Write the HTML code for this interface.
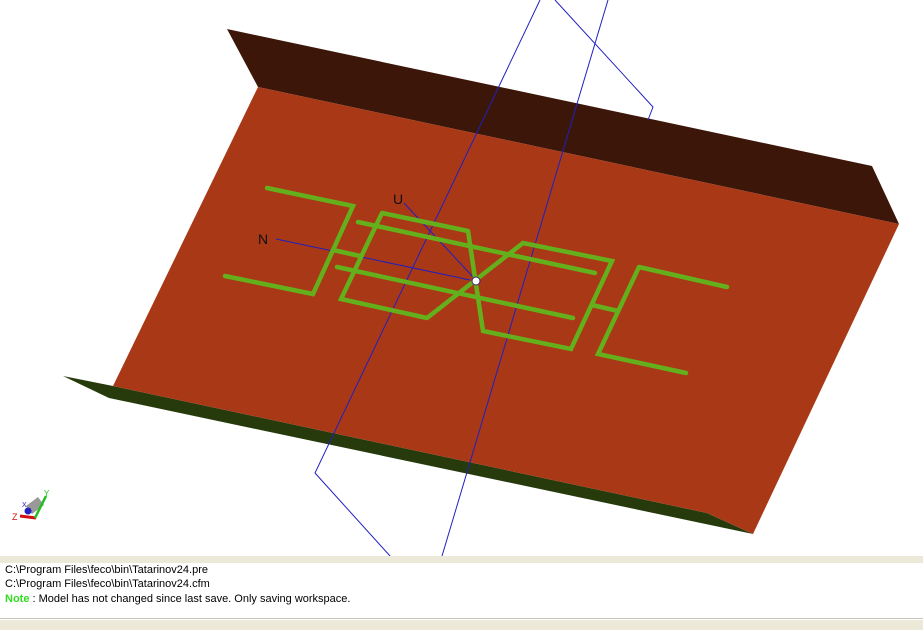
<!DOCTYPE html>
<html><head><style>
html,body{margin:0;padding:0;width:923px;height:630px;overflow:hidden;background:#fff;font-family:Tahoma,"Liberation Sans",sans-serif;}
#view{position:absolute;left:0;top:0;width:923px;height:556px;}
#bar1{position:absolute;left:0;top:556px;width:923px;height:7px;background:#ece9d8;}
#log{position:absolute;left:0;top:563px;width:923px;height:56px;background:#fff;border-bottom:1px solid #c8c5b8;font-size:11px;line-height:14.3px;color:#000;padding-left:5px;box-sizing:border-box;padding-top:0px;}
#bar2{position:absolute;left:0;top:620px;width:923px;height:10px;background:#ece9d8;}
.n{color:#33dd22;font-weight:bold;}
</style></head><body>
<svg id="view" width="923" height="556" viewBox="0 0 923 556">
<polygon points="227,29 872,166 899,224 258,87" fill="#3c1608"/>
<polygon points="63,376 113,386 707,513 753,534 109,398" fill="#263a0c"/>
<polygon points="258,87 899,224 753,534 707,513 113,386" fill="#a93817"/>
<g stroke="#2020c0" stroke-width="1" fill="none">
<polyline points="540,0 315,473 390,556"/>
<polyline points="555,0 653,107 648,120"/>
<line x1="608" y1="0" x2="442" y2="556"/>
<line x1="276" y1="239" x2="470" y2="280"/>
<line x1="404" y1="203" x2="474" y2="278"/>
</g>
<g stroke="#64b01c" stroke-width="4.5" stroke-linecap="round" fill="none">
<path d="M267,188L353,206L313,294L225,276M333,250L360,256M382,213L468,231M382,213L341,299L427,318M358,222L595,273M337,267L573,318M468,231L483,331L571,349L612,261L523,243L427,318M639,267L727,287M639,267L598,354L686,373M592,305L618,311"/>
</g>
<circle cx="476" cy="281" r="4" fill="#fff" stroke="#402060" stroke-width="1"/>
<text x="258" y="244" font-family="Liberation Sans,sans-serif" font-size="14" fill="#111">N</text>
<text x="393" y="204" font-family="Liberation Sans,sans-serif" font-size="14" fill="#111">U</text>
<g>
<polygon points="26,506 38,497 44,505 32,514" fill="#999"/>
<line x1="20" y1="516" x2="36" y2="518" stroke="#d01010" stroke-width="3"/>
<line x1="35" y1="518" x2="46" y2="496" stroke="#20c020" stroke-width="2.5"/>
<circle cx="28" cy="511" r="3.5" fill="#2020c0"/>
<text x="12" y="520" font-size="9" fill="#d01010" font-family="Liberation Sans,sans-serif">Z</text>
<text x="44" y="496" font-size="8" fill="#20c020" font-family="Liberation Sans,sans-serif">Y</text>
<text x="22" y="507" font-size="7" fill="#2020c0" font-family="Liberation Sans,sans-serif">X</text>
</g>
</svg>
<div id="bar1"></div>
<div id="log">C:\Program Files\feco\bin\Tatarinov24.pre<br>C:\Program Files\feco\bin\Tatarinov24.cfm<br><span class="n">Note</span> : Model has not changed since last save. Only saving workspace.</div>
<div id="bar2"></div>
</body></html>
